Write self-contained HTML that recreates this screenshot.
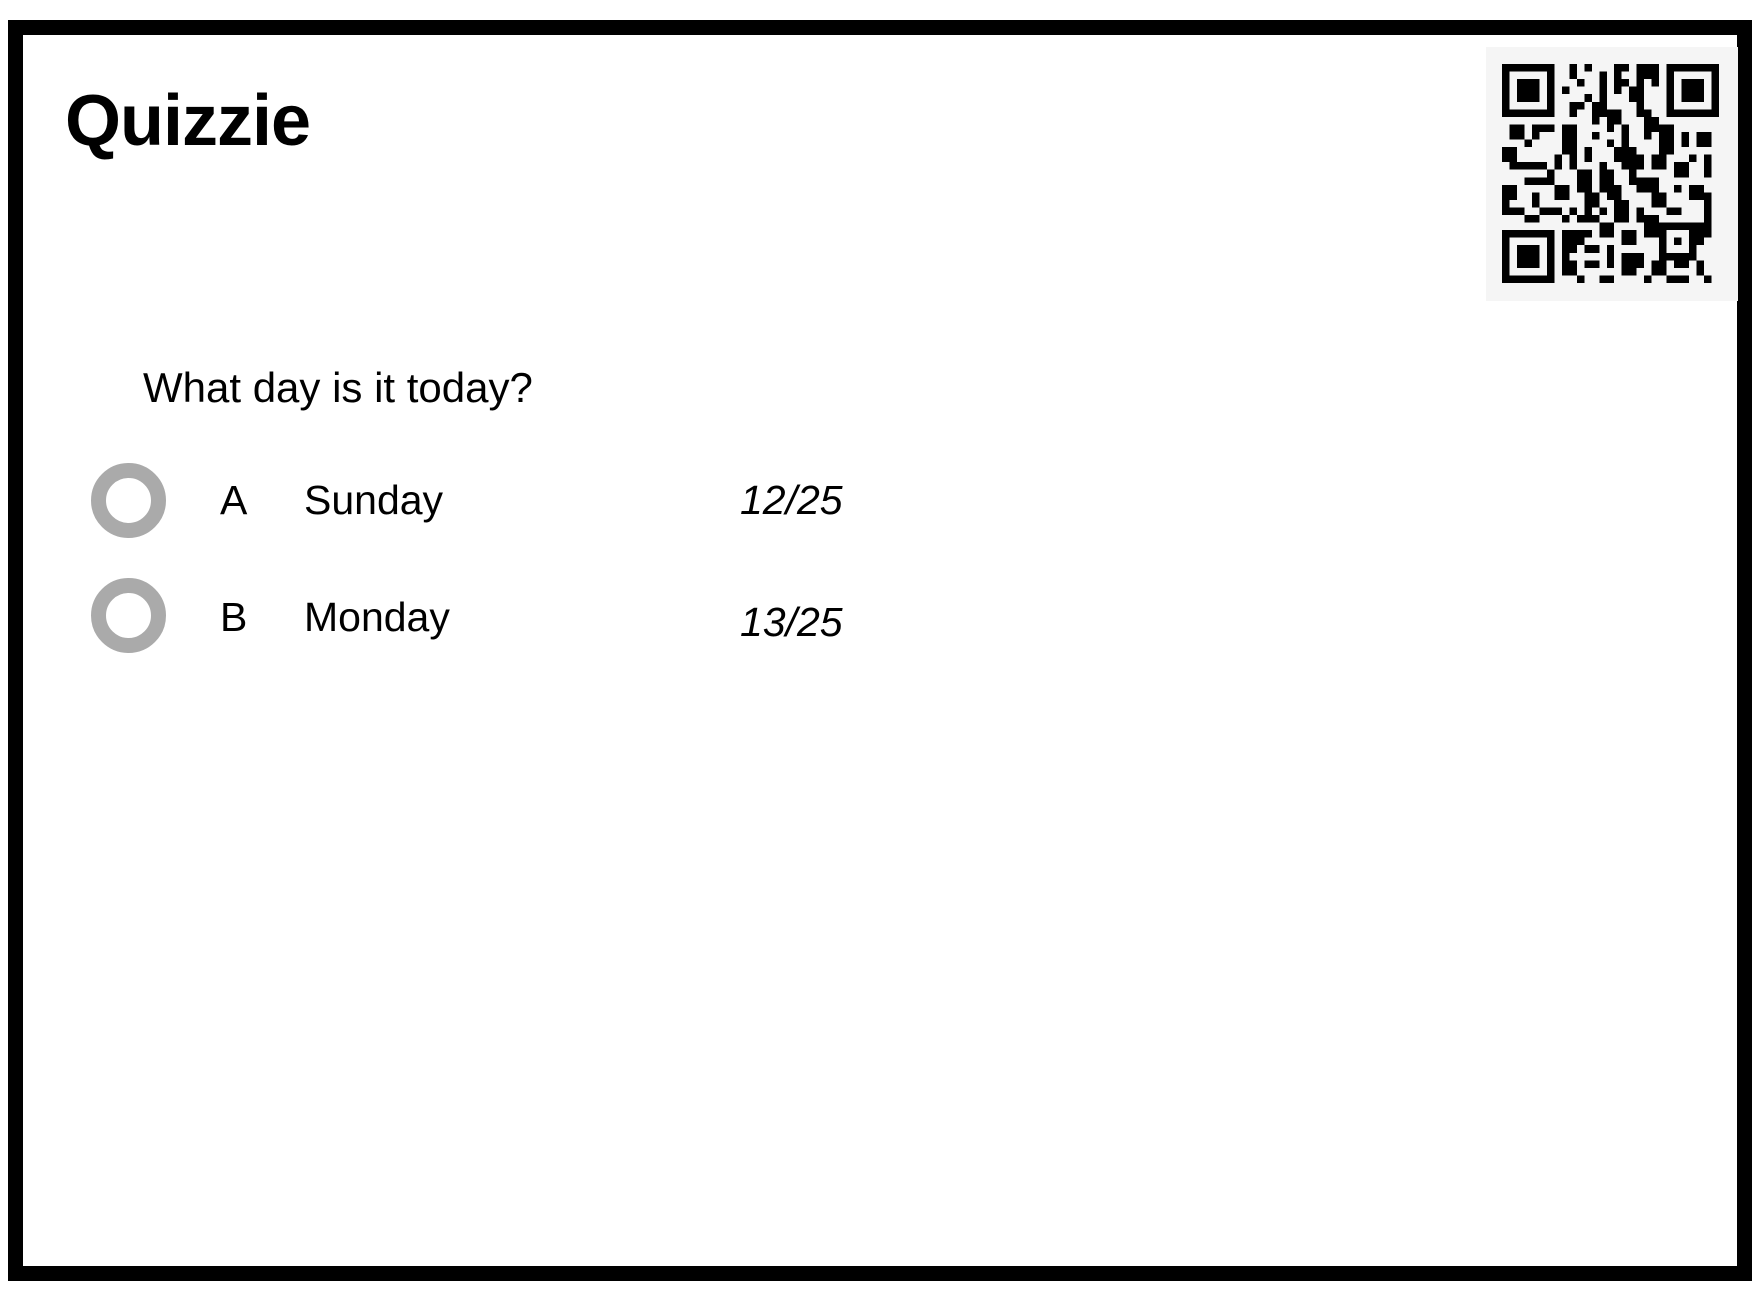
<!DOCTYPE html>
<html><head><meta charset="utf-8"><style>
html,body{margin:0;padding:0;background:#fff;width:1764px;height:1290px;overflow:hidden}
body{position:relative;font-family:"Liberation Sans",Arial,sans-serif;color:#000}
.frame{position:absolute;left:8px;top:20px;width:1714px;height:1231px;border:15px solid #000;background:#fff}
.t{position:absolute;white-space:nowrap;line-height:1}
.ring{position:absolute;width:45px;height:45px;border:15px solid #aaa;border-radius:50%}
</style></head><body>
<div class="frame"></div>
<div class="t" style="left:65px;top:85px;font-size:72px;font-weight:bold;letter-spacing:-1px">Quizzie</div>
<div class="t" style="left:143px;top:367px;font-size:42px">What day is it today?</div>
<div class="ring" style="left:91px;top:463px"></div>
<div class="ring" style="left:91px;top:578px"></div>
<div class="t" style="left:220px;top:480px;font-size:41px">A</div>
<div class="t" style="left:304px;top:480px;font-size:41px">Sunday</div>
<div class="t" style="left:740px;top:480px;font-size:41px;font-style:italic">12/25</div>
<div class="t" style="left:220px;top:597px;font-size:41px">B</div>
<div class="t" style="left:304px;top:597px;font-size:41px">Monday</div>
<div class="t" style="left:740px;top:602px;font-size:41px;font-style:italic">13/25</div>
<div style="position:absolute;left:1486px;top:47px;width:252px;height:254px;background:#f5f5f5"></div>
<svg style="position:absolute;left:1502px;top:64px" width="217" height="219" viewBox="0 0 29 29" preserveAspectRatio="none" shape-rendering="crispEdges" fill="#000">
<path d="M0 0h7v7h-7zM1 1v5h5v-5zM2 2h3v3h-3z" fill-rule="evenodd"/>
<path d="M22 0h7v7h-7zM23 1v5h5v-5zM24 2h3v3h-3z" fill-rule="evenodd"/>
<path d="M0 22h7v7h-7zM1 23v5h5v-5zM2 24h3v3h-3z" fill-rule="evenodd"/>
<path d="M9 0h1v2h1v-2h1v1h-1v2h-1v-1h-1zM8 3h1v1h-1zM13 1h1v6h-1zM15 0h2v1h-1v1h1v1h-1v1h-1zM18 0h3v3h-1v-1h-1v1h-1zM17 3h2v4h-1v-2h-1zM11 4h1v1h-1zM9 5h2v1h-1v1h-1zM12 5h1v3h-1zM14 6h2v2h-1v1h-1zM19 6h1v4h-1zM20 7h1v2h-1z"/>
<path d="M1 8h2v2h-2zM4 8h2v1h-1v1h-1zM6 8h1v1h-1zM8 8h2v2h-1v2h-1zM3 10h1v1h-1zM9 10h1v4h-1v-2h-1v-1h1zM12 9h1v1h-1zM16 8h1v3h-1zM14 10h1v1h-1zM21 8h2v4h-2zM24 9h1v2h-1zM26 9h2v2h-2zM0 11h2v2h4v1h-5v-1h-1zM7 12h1v2h-1zM11 11h1v2h-1zM15 11h3v1h1v2h-3v-1h-1zM20 12h2v2h-2zM25 12h1v1h-1zM27 12h1v3h-1zM13 13h1v1h-1zM23 13h2v2h-2z"/>
<path d="M3 15h3v1h-3zM6 14h1v2h-1zM10 14h2v3h-2zM13 14h2v2h1v2h-2v-1h-1zM17 14h1v2h-1zM18 15h3v2h-3zM0 16h2v2h-1v1h-1zM4 17h1v2h-1zM7 16h2v2h-2zM11 17h2v2h-1v1h-1zM15 18h2v2h-2zM20 17h2v2h-2zM23 16h1v1h-1zM25 16h2v2h-2zM27 17h1v2h-1zM0 19h3v1h-3zM5 19h3v1h-3zM9 19h1v1h-1zM13 19h1v1h-1zM18 19h1v2h-1zM22 19h2v1h-2zM27 19h1v3h-1zM3 20h2v1h-2zM8 20h1v1h-1zM10 20h3v1h-3zM15 20h2v1h-2zM19 20h2v3h-2z"/>
<path d="M8 22h4v1h-1v2h-2v1h-1zM13 21h2v2h-2zM16 22h2v2h-2zM21 21h5v5h-5zM22 22v3h3v-3zM23 23h1v1h-1zM26 21h2v2h-1v1h-1zM10 24h3v1h-3zM14 24h1v3h-1zM8 26h2v2h-2zM11 26h2v1h-2zM16 25h3v2h-1v1h-2zM20 26h2v2h-2zM23 26h2v1h-2zM26 26h1v2h-1zM10 28h1v1h-1zM13 28h2v1h-2zM19 28h1v1h-1zM22 28h3v1h-3zM27 28h1v1h-1z" fill-rule="evenodd"/>
</svg>
</body></html>
